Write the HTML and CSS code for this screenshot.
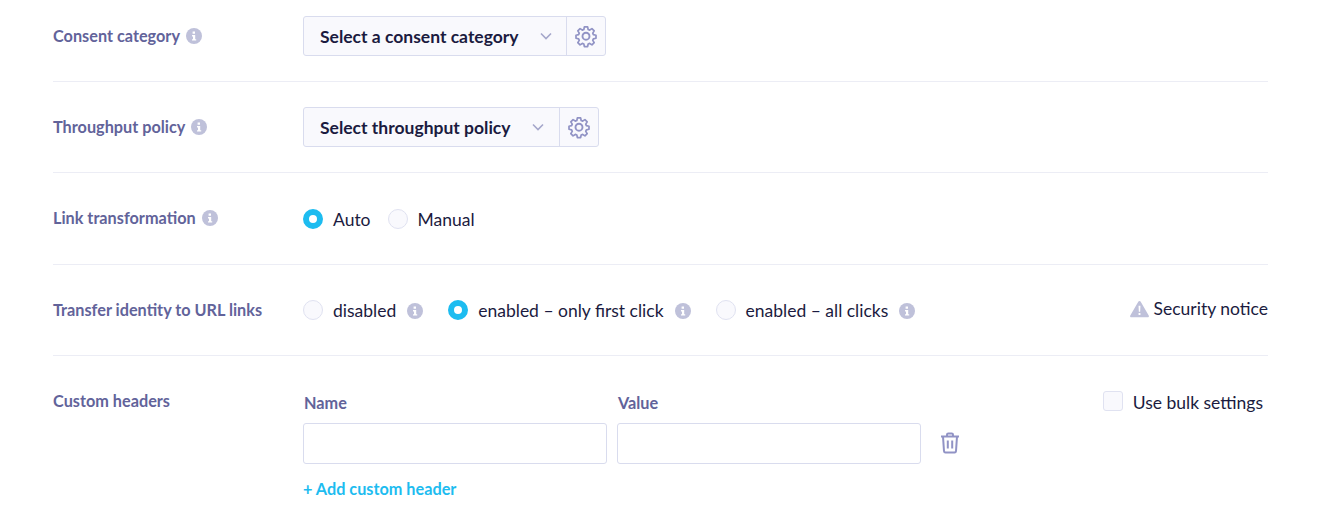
FILE: index.html
```html
<!DOCTYPE html>
<html>
   <head>
      <meta name="viewport" content="width=device-width, initial-scale=1">
      <title>Email settings</title>
      <link rel="stylesheet" href="styles.css">
   </head>
   <body>
      <svg class="sprites" width="0" height="0">
         <defs>
            <symbol id="infoIcon" viewBox="0 0 16 16">
               <circle cx="8" cy="8" r="8" fill="currentColor" />
               <path d="M6.600 3.600h2.400v2.200H6.600z M6 7h3.200v4.200h1v1.400H6v-1.400h1V8.400H6z" fill="#fff" />
            </symbol>
            <symbol id="gearIcon" viewBox="0 0 24 24">
               <path fill="none" stroke="currentColor" stroke-width="1.900" stroke-linejoin="round" d="M10.200 2.500h3.600l.6 2.900 1.700.7 2.500-1.600 2.500 2.500-1.600 2.500.7 1.700 2.900.6v3.400l-2.900.6-.7 1.700 1.600 2.500-2.500 2.500-2.500-1.600-1.700.7-.6 2.900h-3.600l-.6-2.900-1.700-.7-2.500 1.600-2.500-2.500 1.600-2.500-.7-1.700-2.900-.6v-3.400l2.900-.6.7-1.700-1.600-2.500 2.500-2.500 2.500 1.600 1.700-.7z" transform="translate(1.200 .6) scale(.9)" />
               <circle cx="12" cy="12.200" r="3.500" fill="none" stroke="currentColor" stroke-width="1.900" />
            </symbol>
            <symbol id="chevronIcon" viewBox="0 0 12 8">
               <path d="M1 1.500l5 5 5-5" fill="none" stroke="currentColor" stroke-width="1.600" />
            </symbol>
         </defs>
      </svg>

      <div class="settings">

         <!-- Consent category -->
         <div class="row row-first">
            <div class="row-label">Consent category <svg class="info"><use href="#infoIcon" /></svg></div>
            <div class="select-group">
               <div class="select select-consent">
                  <span>Select a consent category</span>
                  <svg class="chevron"><use href="#chevronIcon" /></svg>
               </div>
               <div class="select-gear"><svg class="gear"><use href="#gearIcon" /></svg></div>
            </div>
         </div>

         <!-- Throughput policy -->
         <div class="row">
            <div class="row-label">Throughput policy <svg class="info"><use href="#infoIcon" /></svg></div>
            <div class="select-group">
               <div class="select select-throughput">
                  <span>Select throughput policy</span>
                  <svg class="chevron"><use href="#chevronIcon" /></svg>
               </div>
               <div class="select-gear"><svg class="gear"><use href="#gearIcon" /></svg></div>
            </div>
         </div>

         <!-- Link transformation -->
         <div class="row row-tall">
            <div class="row-label">Link transformation <svg class="info"><use href="#infoIcon" /></svg></div>
            <div class="options">
               <div class="option"><span class="radio radio-on"></span>Auto</div>
               <div class="option"><span class="radio"></span>Manual</div>
            </div>
         </div>

         <!-- Transfer identity -->
         <div class="row">
            <div class="row-label">Transfer identity to URL links</div>
            <div class="options options-wide">
               <div class="option"><span class="radio"></span>disabled <svg class="info"><use href="#infoIcon" /></svg></div>
               <div class="option"><span class="radio radio-on"></span>enabled – only first click <svg class="info"><use href="#infoIcon" /></svg></div>
               <div class="option"><span class="radio"></span>enabled – all clicks <svg class="info"><use href="#infoIcon" /></svg></div>
            </div>
            <div class="notice">
               <svg class="warning" viewBox="0 0 20 18">
                  <path d="M10 .5c.6 0 1 .3 1.300.8l8.400 14.600c.5.900 0 1.800-1 1.800H1.300c-1 0-1.500-.9-1-1.800L8.700 1.300c.3-.5.700-.8 1.300-.8z" fill="#bfc1da" />
                  <path d="M9 5.500h2l-.3 6.500H9.300z M9 13.200h2v2.100H9z" fill="#fff" />
               </svg>
               Security notice
            </div>
         </div>

         <!-- Custom headers -->
         <div class="row row-last">
            <div class="row-label">Custom headers</div>
            <div class="headers">
               <div class="header-fields">
                  <div class="field">
                     <label class="field-label">Name</label>
                     <input type="text" class="field-input">
                  </div>
                  <div class="field">
                     <label class="field-label">Value</label>
                     <input type="text" class="field-input">
                  </div>
                  <svg class="trash" viewBox="0 0 20 22">
                     <path d="M1 4.500h18 M7 4.500V2.800c0-.8.500-1.300 1.300-1.300h3.400c.8 0 1.300.5 1.300 1.300v1.700 M3 4.500l1 14.700c.1 .8.600 1.300 1.400 1.300h9.200c.8 0 1.300-.5 1.400-1.300l1-14.700 M7.800 8.500v8 M12.200 8.500v8" fill="none" stroke="currentColor" stroke-width="2" />
                  </svg>
               </div>
               <a class="add-header">+ Add custom header</a>
            </div>
            <div class="bulk"><span class="checkbox"></span>Use bulk settings</div>
         </div>

      </div>
   </body>
</html>
```

FILE: styles.css
```css
body {
   margin : 0;
   background-color : #fff;
   font-family : Lato, "Open Sans", sans-serif;
   color : #1b1b40;
}

.sprites {
   position : absolute;
}

.settings {
   padding : 0 57px 0 53px;
}

.row {
   display : flex;
   align-items : flex-start;
   height : 65px;
   padding-top : 25px;
   border-bottom : 1px solid #ecedf5;
}

.row-first {
   padding-top : 16px;
}

.row-tall {
   height : 66px;
}

.row-last {
   border-bottom : none;
   height : 130px;
}

.row-label {
   display : flex;
   align-items : center;
   gap : 6px;
   width : 250px;
   flex : none;
   height : 24px;
   margin-top : 7px;
   font-size : 16.25px;
   font-weight : 700;
   color : #62639a;
}

.info {
   width : 16px;
   height : 16px;
   flex : none;
   color : #bfc1da;
}

.row-label .info {
   margin-top : 2px;
}

.select-group {
   display : flex;
   height : 40px;
   box-sizing : border-box;
   border : 1px solid #d9dcee;
   border-radius : 3px;
   background-color : #f9f9fd;
}

.select {
   display : flex;
   align-items : center;
   justify-content : space-between;
   box-sizing : border-box;
   padding : 0 14px 0 16px;
   font-size : 17.5px;
   font-weight : 700;
   border-right : 1px solid #d9dcee;
}

.select-consent {
   width : 263px;
}

.select-throughput {
   width : 256px;
   padding-right : 15px;
}

.chevron {
   width : 12px;
   height : 8px;
   color : #a5a7cb;
}

.select-gear {
   display : flex;
   align-items : center;
   justify-content : center;
   width : 38px;
}

.gear {
   width : 24px;
   height : 24px;
   color : #9193c5;
}

.options {
   display : flex;
   align-items : center;
   gap : 17px;
   height : 24px;
   margin-top : 9px;
   font-size : 17.5px;
}

.options-wide {
   gap : 25px;
   margin-top : 8px;
}

.option {
   display : flex;
   align-items : center;
}

.option .info {
   margin-left : 11px;
   margin-top : 1px;
}

.radio {
   width : 20px;
   height : 20px;
   box-sizing : border-box;
   margin-right : 10px;
   border : 1px solid #e0e2f1;
   border-radius : 50%;
   background-color : #f9f9fd;
}

.radio-on {
   border : 6px solid #1dbcf0;
   background-color : #fff;
}

.notice {
   display : flex;
   align-items : center;
   gap : 5px;
   height : 24px;
   margin-top : 6px;
   margin-left : auto;
   font-size : 17.5px;
}

.warning {
   width : 19px;
   height : 18px;
   margin-top : 2px;
}

.headers {
   flex : none;
   padding-top : 12px;
}

.header-fields {
   display : flex;
   gap : 10px;
}

.field {
   display : flex;
   flex-direction : column;
   width : 304px;
}

.field-label {
   height : 30px;
   padding-left : 1px;
   font-size : 16.25px;
   font-weight : 700;
   line-height : 20px;
   color : #62639a;
}

.field-input {
   box-sizing : border-box;
   height : 41px;
   border : 1px solid #d9dcee;
   border-radius : 3px;
   background-color : #fff;
}

.trash {
   width : 20px;
   height : 22px;
   margin : 39px 0 0 9px;
   color : #9193c5;
}

.add-header {
   display : block;
   margin-top : 15px;
   font-size : 16.25px;
   font-weight : 700;
   color : #1dbcf0;
}

.bulk {
   display : flex;
   align-items : center;
   margin-left : auto;
   margin-right : 5px;
   height : 24px;
   margin-top : 9px;
   font-size : 17.5px;
}

.checkbox {
   width : 20px;
   height : 20px;
   box-sizing : border-box;
   margin-right : 10px;
   margin-top : -3px;
   border : 1px solid #e0e2f1;
   border-radius : 3px;
   background-color : #f9f9fd;
}
```
